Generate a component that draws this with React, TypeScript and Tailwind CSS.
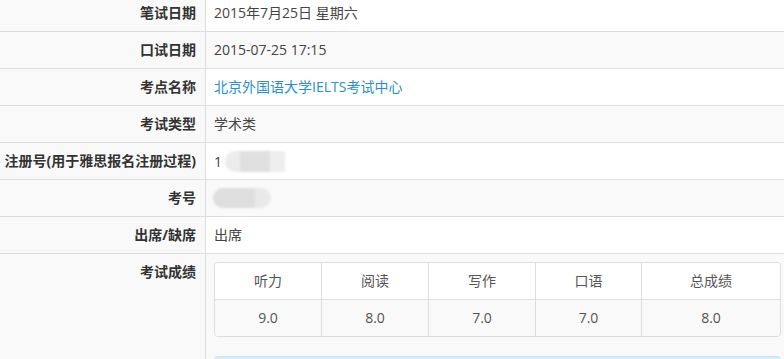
const rows: { label: string; value: React.ReactNode; first?: boolean }[] = [
  { label: '笔试日期', value: '2015年7月25日 星期六', first: true },
  { label: '口试日期', value: '2015-07-25 17:15' },
  { label: '考点名称', value: <a className="text-[#2a8fcb]">北京外国语大学IELTS考试中心</a> },
  { label: '考试类型', value: '学术类' },
  {
    label: '注册号(用于雅思报名注册过程)',
    value: (
      <span className="flex items-center">
        <span>1</span>
        <span className="ml-[3px] flex h-[21px] overflow-hidden rounded-l-full blur-[1px]">
          <span className="w-[15px] bg-[#ececec]" />
          <span className="w-[30px] bg-[#e0e0e0]" />
          <span className="w-[15px] bg-[#eeeeee]" />
        </span>
      </span>
    ),
  },
  {
    label: '考号',
    value: (
      <span className="flex h-[20px] items-center">
        <span className="-ml-[1px] flex h-[20px] overflow-hidden rounded-full blur-[1px]">
          <span className="w-[42px] bg-[#dedede]" />
          <span className="w-[16px] bg-[#e9e9e9]" />
        </span>
      </span>
    ),
  },
  { label: '出席/缺席', value: '出席' },
]

const scores = [
  { name: '听力', score: '9.0', w: 'w-[107px]' },
  { name: '阅读', score: '8.0', w: 'w-[107px]' },
  { name: '写作', score: '7.0', w: 'w-[107px]' },
  { name: '口语', score: '7.0', w: 'w-[106px]' },
  { name: '总成绩', score: '8.0', w: 'flex-1' },
]

export default function App() {
  return (
    <div
      className="h-[359px] w-[784px] overflow-hidden bg-white text-[14px] leading-[20px] text-[#333]"
      style={{ fontFamily: '"Open Sans", "Noto Sans CJK SC", sans-serif' }}
    >
      {rows.map((row, i) => (
        <div
          key={row.label}
          className={`flex border-b border-[#dddddd] ${row.first ? 'h-[32px]' : 'h-[37px]'} ${
            i % 2 === 1 ? 'bg-[#f9f9f9]' : 'bg-white'
          }`}
        >
          <div
            className={`w-[206px] shrink-0 border-r border-[#dddddd] bg-[#f9f9f9] pr-[9px] text-right font-bold ${
              row.first ? 'pt-[3px]' : 'pt-[8px]'
            }`}
          >
            {row.label}
          </div>
          <div className={`pl-[8px] text-[#444] ${row.first ? 'pt-[3px]' : 'pt-[8px]'}`}>{row.value}</div>
        </div>
      ))}

      <div className="flex bg-[#f9f9f9]">
        <div className="w-[206px] shrink-0 border-r border-[#dddddd] pr-[9px] pt-[8px] text-right font-bold">
          考试成绩
        </div>
        <div className="pl-[8px] pt-[8px]">
          <div className="w-[567px] overflow-hidden rounded-[4px] border border-[#dddddd] text-center text-[#555]">
            <div className="flex h-[37px] border-b border-[#dddddd] bg-white">
              {scores.map((s, i) => (
                <div
                  key={s.name}
                  className={`${s.w} pt-[8px] ${i < scores.length - 1 ? 'border-r border-[#dddddd]' : ''}`}
                >
                  {s.name}
                </div>
              ))}
            </div>
            <div className="flex h-[36px] bg-[#f9f9f9]">
              {scores.map((s, i) => (
                <div
                  key={s.name}
                  className={`${s.w} pt-[8px] ${i < scores.length - 1 ? 'border-r border-[#dddddd]' : ''}`}
                >
                  {s.score}
                </div>
              ))}
            </div>
          </div>
          <div className="mt-[19px] h-[40px] w-[567px] rounded-[4px] border border-[#bce8f1] bg-[#d9edf7]" />
        </div>
      </div>
    </div>
  )
}
